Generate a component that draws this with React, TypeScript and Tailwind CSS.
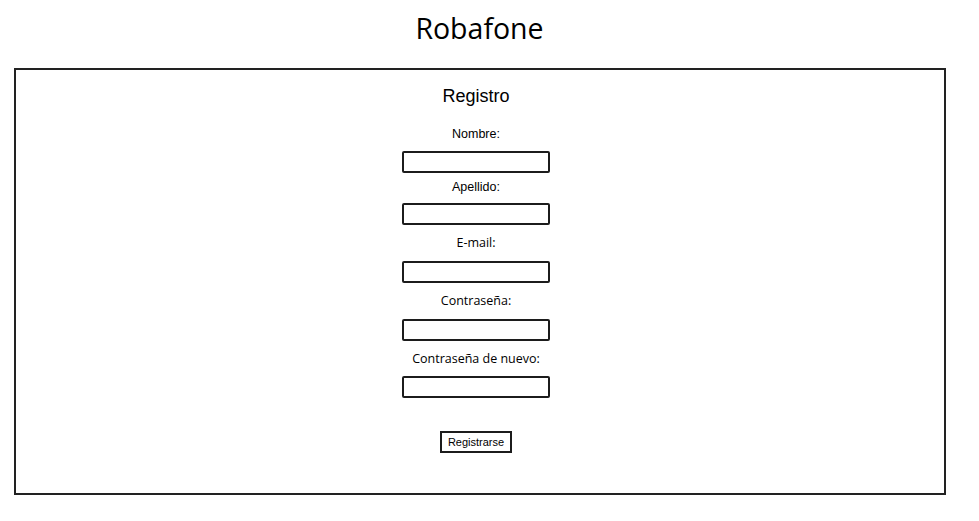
import React from "react";

const rounded = { fontFamily: '"Open Sans", "Noto Sans", sans-serif' };
const arial = { fontFamily: '"Liberation Sans", Arial, sans-serif' };

function Field({ label, font, labelMt, inputMt }: { label: string; font: React.CSSProperties; labelMt: string; inputMt: string }) {
  return (
    <>
      <div className={`${labelMt} h-[16px] text-[12.5px] leading-[16px] text-black`} style={font}>
        {label}
      </div>
      <div className={`${inputMt} h-[22px] w-[148px] rounded-[2px] border-2 border-[#1c1c1c] bg-white`} />
    </>
  );
}

export default function App() {
  return (
    <div className="w-[979px] h-[521px] bg-white overflow-hidden">
      <div className="w-[959px]">
        <div className="pt-[10px] h-[46px] text-center text-[28.5px] leading-[36px] font-medium text-black" style={rounded}>
          Robafone
        </div>
        <div className="mt-[22px] ml-[14px] w-[932px] h-[427px] border-2 border-[#222] flex flex-col items-center pr-[8px]">
          <div className="mt-[15px] h-[22px] text-[18px] leading-[22px] text-black" style={arial}>
            Registro
          </div>
          <Field label="Nombre:" font={arial} labelMt="mt-[19px]" inputMt="mt-[9px]" />
          <Field label="Apellido:" font={arial} labelMt="mt-[6px]" inputMt="mt-[8px]" />
          <Field label="E-mail:" font={rounded} labelMt="mt-[10px]" inputMt="mt-[10px]" />
          <Field label="Contraseña:" font={rounded} labelMt="mt-[10px]" inputMt="mt-[10px]" />
          <Field label="Contraseña de nuevo:" font={rounded} labelMt="mt-[10px]" inputMt="mt-[9px]" />
          <button
            className="mt-[33px] h-[22px] w-[72px] border-2 border-[#1c1c1c] bg-white text-[11px] leading-[18px] text-black"
            style={arial}
          >
            Registrarse
          </button>
        </div>
      </div>
    </div>
  );
}
